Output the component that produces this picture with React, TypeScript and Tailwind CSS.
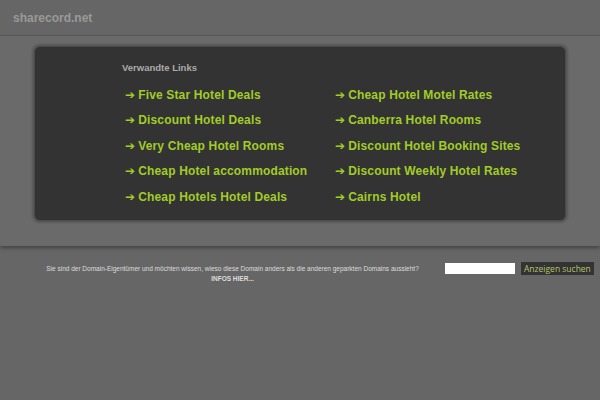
import React from "react";

const left = ["Five Star Hotel Deals", "Discount Hotel Deals", "Very Cheap Hotel Rooms", "Cheap Hotel accommodation", "Cheap Hotels Hotel Deals"];
const right = ["Cheap Hotel Motel Rates", "Canberra Hotel Rooms", "Discount Hotel Booking Sites", "Discount Weekly Hotel Rates", "Cairns Hotel"];

export default function App() {
  const rows = left.map((l, i) => [l, right[i]]);
  return (
    <div className="w-[600px] h-[400px] bg-[#666666] overflow-hidden" style={{ fontFamily: '"Liberation Sans", Arial, sans-serif' }}>
      <div className="h-[36px] flex items-center pl-[13px] border-b border-[#5a5a5a]">
        <span className="text-[12px] font-bold text-[#999999]">sharecord.net</span>
      </div>
      <div className="bg-[#6a6a6a] pt-[10px] pb-[25px] shadow-[0_2px_4px_rgba(0,0,0,0.35)] relative">
        <div className="ml-[34px] w-[532px] h-[175px] bg-[#333333] rounded-[6px] border border-[#4a4a4a] shadow-[0_0_2px_2px_rgba(0,0,0,0.18)] pl-[87px] pt-[14px]">
          <div className="text-[9.5px] font-bold text-[#aaaaaa] h-[14px] leading-[14px]">Verwandte Links</div>
          <div className="mt-[7px] flex flex-col">
            {rows.map(([a, b]) => (
              <div key={a} className="flex h-[25.5px] items-center">
                <div className="w-[213px] pl-[3px] text-[12px] font-bold text-[#a2cc27] tracking-[0.15px]"><span className="text-[12px] mr-[3px] font-['DejaVu_Sans'] font-bold">➔</span>{a}</div>
                <div className="text-[12px] font-bold text-[#a2cc27] tracking-[0.15px]"><span className="text-[12px] mr-[3px] font-['DejaVu_Sans'] font-bold">➔</span>{b}</div>
              </div>
            ))}
          </div>
        </div>
      </div>
      <div className="flex items-start pt-[18px]">
        <div className="w-[440px] flex flex-col items-center text-[#dddddd]">
          <div className="text-[6.5px] leading-[10px] pl-[25px]">Sie sind der Domain-Eigentümer und möchten wissen, wieso diese Domain anders als die anderen geparkten Domains aussieht?</div>
          <div className="text-[6.5px] font-bold leading-[10px] pl-[25px]">INFOS HIER...</div>
        </div>
        <div className="ml-[5px] w-[70px] h-[11px] bg-white mt-[-1px]" />
        <div className="ml-[6px] mt-[-2px] h-[13px] px-[3px] bg-[#333333] text-[#b5c46a] text-[8.5px] leading-[13px]" style={{ fontFamily: '"Open Sans", sans-serif' }}>Anzeigen suchen</div>
      </div>
    </div>
  );
}
